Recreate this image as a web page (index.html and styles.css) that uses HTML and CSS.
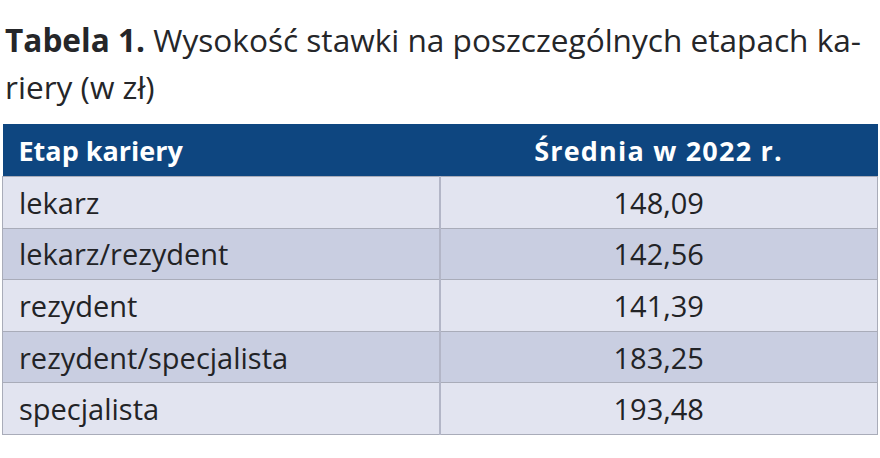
FILE: index.html
```html
<!DOCTYPE html>
<html lang="pl">
<head>
<meta charset="utf-8">
<link rel="stylesheet" href="styles.css">
</head>
<body>
<div class="page">
  <h1 class="caption"><span class="caption-label">Tabela 1.</span> Wysokość stawki na poszczególnych etapach ka-<br>riery (w zł)</h1>
  <table class="rates">
    <thead>
      <tr><th class="col-stage">Etap kariery</th><th class="col-avg">Średnia w 2022 r.</th></tr>
    </thead>
    <tbody>
      <tr class="odd"><td>lekarz</td><td class="num">148,09</td></tr>
      <tr class="even"><td>lekarz/rezydent</td><td class="num">142,56</td></tr>
      <tr class="odd"><td>rezydent</td><td class="num">141,39</td></tr>
      <tr class="even"><td>rezydent/specjalista</td><td class="num">183,25</td></tr>
      <tr class="odd"><td>specjalista</td><td class="num">193,48</td></tr>
    </tbody>
  </table>
</div>
</body>
</html>
```

FILE: styles.css
```css
html, body {
  margin: 0;
  padding: 0;
  background: #ffffff;
}

.page {
  font-family: "Open Sans", "Noto Sans", sans-serif;
  color: #222326;
  padding: 16px 0 0 2px;
  width: 876px;
}

.caption {
  margin: 0 0 0 3px;
  font-size: 31.6px;
  font-weight: 400;
  line-height: 47px;
  color: #252629;
  height: 108px;
  white-space: nowrap;
}

.caption-label {
  font-weight: 700;
}

.rates {
  width: 876px;
  border-collapse: collapse;
  table-layout: fixed;
}

.rates th {
  background: #0e4680;
  color: #ffffff;
  font-size: 27px;
  font-weight: 700;
  height: 52px;
  padding: 0;
  vertical-align: middle;
}

.rates .col-stage {
  text-align: left;
  padding-left: 16px;
  width: 421px;
}

.rates .col-avg {
  text-align: center;
  letter-spacing: 1.2px;
}

.rates td {
  font-size: 29px;
  height: 50.6px;
  padding: 0 0 0 16px;
  border: 1px solid #a9acb9;
  vertical-align: middle;
  line-height: 1;
}

.rates td.num {
  text-align: center;
  padding: 0;
  border-left: 2px solid #b3b6c7;
}

.rates tr.odd td {
  background: #e2e4f0;
}

.rates tr.even td {
  background: #c9cee1;
}
```
